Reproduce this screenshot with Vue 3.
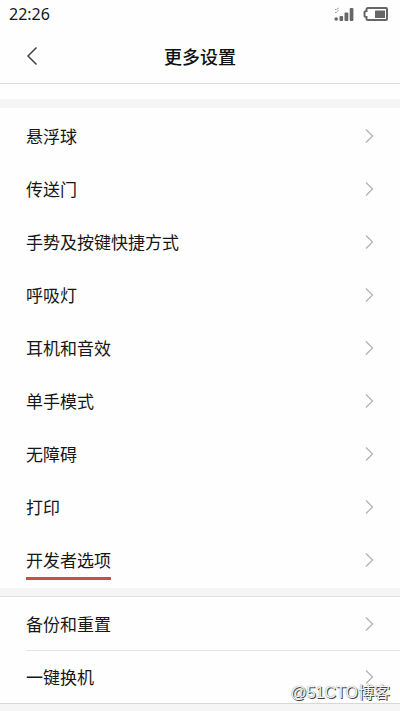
<template>
  <div class="page">
    <div class="status">
      <time>22:26</time>
      <div class="status-icons">
        <svg class="signal" width="20" height="14" viewBox="0 0 20 14">
          <circle cx="2.200" cy="12" r="1.8" />
          <rect x="5.500" y="9" width="3.6" height="5" rx="1" />
          <rect x="10.500" y="5.5" width="3.8" height="8.5" rx="1" />
          <rect x="15.7" y="1" width="3.7" height="13" rx="1" />
          <path class="faint" d="M1 2.500h1.600M1 5.500h1.600M3 2l1.700-1M3.200 4.500l1.500-1" />
        </svg>
        <svg class="battery" width="26" height="14" viewBox="0 0 26 14">
          <path d="M5 1H23q1 0 1 1v10q0 1-1 1H5Q3.500 13 3.500 11.500V10Q1.500 10 1.500 8.500V5.500Q1.500 4 3.500 4V2.500Q3.500 1 5 1Z" class="case" />
          <rect x="12" y="3.500" width="10" height="7.500" rx=".5" />
        </svg>
      </div>
    </div>

    <header class="header">
      <button class="back" type="button" aria-label="返回">
        <svg width="12" height="20" viewBox="0 0 12 20">
          <path d="M10.500 1.500L2 10l8.500 8.500" />
        </svg>
      </button>
      <h1>更多设置</h1>
    </header>

    <main>
      <nav class="group">
        <a v-for="item in features" :key="item" class="row" href="#">
          <span :class="{ marked: item === '开发者选项' }">{{ item }}</span>
          <svg class="arrow" width="9" height="16" viewBox="0 0 9 16">
            <path d="M1 1.500L7.500 8L1 14.500" />
          </svg>
        </a>
      </nav>
      <nav class="group lined">
        <a v-for="item in system" :key="item" class="row" href="#">
          <span>{{ item }}</span>
          <svg class="arrow" width="9" height="16" viewBox="0 0 9 16">
            <path d="M1 1.500L7.500 8L1 14.500" />
          </svg>
        </a>
      </nav>
    </main>

    <div class="watermark">@51CTO博客</div>
  </div>
</template>

<script setup>
const features = [
  "悬浮球",
  "传送门",
  "手势及按键快捷方式",
  "呼吸灯",
  "耳机和音效",
  "单手模式",
  "无障碍",
  "打印",
  "开发者选项",
];

const system = ["备份和重置", "一键换机"];
</script>

<style>
body {
  background: #f5f5f5;
}
</style>

<style scoped>
.page {
  position: relative;
  box-sizing: border-box;
  min-height: 100vh;
  background: #f5f5f5;
  color: #161616;
  font-family: "Noto Sans", "Noto Sans CJK SC", sans-serif;
}

.status {
  display: flex;
  align-items: center;
  justify-content: space-between;
  height: 28px;
  padding: 0 11px 0 9px;
  background: #fefefe;
  font-size: 16px;
  line-height: 20px;
}

.status-icons {
  display: flex;
  gap: 9px;
  fill: #666;
}

.faint {
  stroke: #999;
}

.battery .case {
  fill: none;
  stroke: #666;
  stroke-width: 2;
}

.header {
  display: grid;
  grid-template-columns: 48px 1fr 48px;
  align-items: center;
  height: 55px;
  padding: 0 8px;
  border-bottom: 1px solid #dcdcdc;
  background: #fefefe;
}

.header h1 {
  margin: 0;
  text-align: center;
  font-family: "Noto Sans CJK SC", sans-serif;
  font-size: 18px;
  font-weight: 500;
  line-height: 24px;
  color: #111;
}

.back {
  display: flex;
  align-items: center;
  justify-content: center;
  height: 48px;
  padding: 0;
  border: 0;
  background: none;
}

.back path {
  fill: none;
  stroke: #444;
  stroke-width: 1.5;
}

main {
  border-top: 15px solid #fefefe;
}

.group {
  margin-top: 9px;
  padding: 1px 0 2px;
  background: #fefefe;
}

.row {
  display: flex;
  align-items: center;
  justify-content: space-between;
  height: 53px;
  margin-left: 26px;
  padding-right: 26px;
  color: inherit;
  font-family: "Noto Sans CJK SC", sans-serif;
  font-size: 17px;
  line-height: 24px;
  text-decoration: none;
}

.arrow {
  fill: none;
  stroke: #b4b4b4;
  stroke-width: 1.3;
}

.marked {
  position: relative;
}

.marked::after {
  content: "";
  position: absolute;
  right: 0;
  bottom: -8px;
  left: 0;
  height: 3px;
  background: #c94f45;
}

.lined {
  margin-top: 8px;
  padding: 0;
  border-top: 1px solid #e2e2e2;
  border-bottom: 1px solid #d8d8d8;
}

.lined .row + .row {
  border-top: 1px solid #e6e6e6;
  height: 52px;
}

.watermark {
  position: absolute;
  right: 10px;
  bottom: 7px;
  color: #f4f4f4;
  font-family: "Liberation Sans", "Noto Sans CJK SC", sans-serif;
  font-size: 16px;
  line-height: 22px;
  text-shadow: 1px 1px 0 #444, 0 0 1px #777;
  pointer-events: none;
}
</style>
